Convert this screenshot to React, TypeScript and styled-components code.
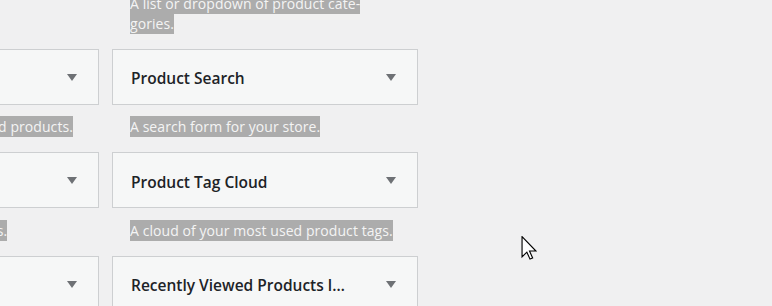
import React from "react";
import styled, { createGlobalStyle } from "styled-components";

const Global = createGlobalStyle`
  html, body { margin: 0; padding: 0; background: #f0f0f1; overflow: hidden; }
  body { width: 772px; height: 306px; font-family: "Open Sans", "Noto Sans", sans-serif; }
`;

const Page = styled.div`
  position: relative;
  width: 772px;
  height: 306px;
  overflow: hidden;
`;

const Grid = styled.div`
  display: grid;
  grid-template-columns: 306px 306px;
  column-gap: 13px;
  margin-left: -207px;
  margin-top: -75px;
`;

const Item = styled.div`
  display: flex;
  flex-direction: column;
`;

const Card = styled.div`
  box-sizing: border-box;
  height: 56px;
  border: 1px solid #cdcfd1;
  background: #f6f7f7;
  display: flex;
  align-items: center;
  justify-content: space-between;
  padding: 3px 21px 0 18px;
`;

const Title = styled.h3`
  margin: 0;
  font-size: 15.5px;
  font-weight: 600;
  color: #1d2327;
  white-space: nowrap;
  overflow: hidden;
  text-overflow: ellipsis;
  max-width: 216px;
`;

const Arrow = styled.span`
  width: 0;
  height: 0;
  border-left: 5.5px solid transparent;
  border-right: 5.5px solid transparent;
  border-top: 7px solid #6e7175;
  margin-top: -2px;
`;

const Desc = styled.p`
  margin: 12.5px 0 15px 0;
  padding: 0 18px;
  font-size: 14px;
  line-height: 20px;
  letter-spacing: 0.07px;
  color: #f4f4f4;
`;

const Hl = styled.span`
  background: #acacac;
  padding: 1px 0;
`;

const Cursor = styled.svg`
  position: absolute;
  left: 521px;
  top: 236px;
`;

const rows: { title: string; desc: string }[][] = [
  [
    { title: "Filter Products by Stock", desc: "Display a list of stock." },
    { title: "Product Categories", desc: "A list or dropdown of product cate-\ngories." },
  ],
  [
    { title: "Products by Rating", desc: "A list of your store's top-rated products." },
    { title: "Product Search", desc: "A search form for your store." },
  ],
  [
    { title: "Products", desc: "A list of your store's products." },
    { title: "Product Tag Cloud", desc: "A cloud of your most used product tags." },
  ],
  [
    { title: "Recent Product Reviews", desc: "Display a list of recent reviews." },
    { title: "Recently Viewed Products list", desc: "Display a list of recently viewed products." },
  ],
];

export default function App() {
  return (
    <Page>
      <Global />
      <Grid>
        {rows.flat().map((w, i) => (
          <Item key={i}>
            <Card>
              <Title>{w.title}</Title>
              <Arrow />
            </Card>
            <Desc>
              {w.desc.split("\n").map((line, j, arr) => (
                <React.Fragment key={j}>
                  <Hl>{line}</Hl>
                  {j < arr.length - 1 && <br />}
                </React.Fragment>
              ))}
            </Desc>
          </Item>
        ))}
      </Grid>
      <Cursor width="16" height="24" viewBox="0 0 12 19">
        <path
          d="M0.5 0.5 L0.5 16.5 L4.3 12.8 L6.8 18.3 L8.9 17.4 L6.4 11.9 L11.5 11.9 Z"
          fill="#fff"
          stroke="#000"
          strokeWidth="0.9"
          strokeLinejoin="miter"
        />
      </Cursor>
    </Page>
  );
}
